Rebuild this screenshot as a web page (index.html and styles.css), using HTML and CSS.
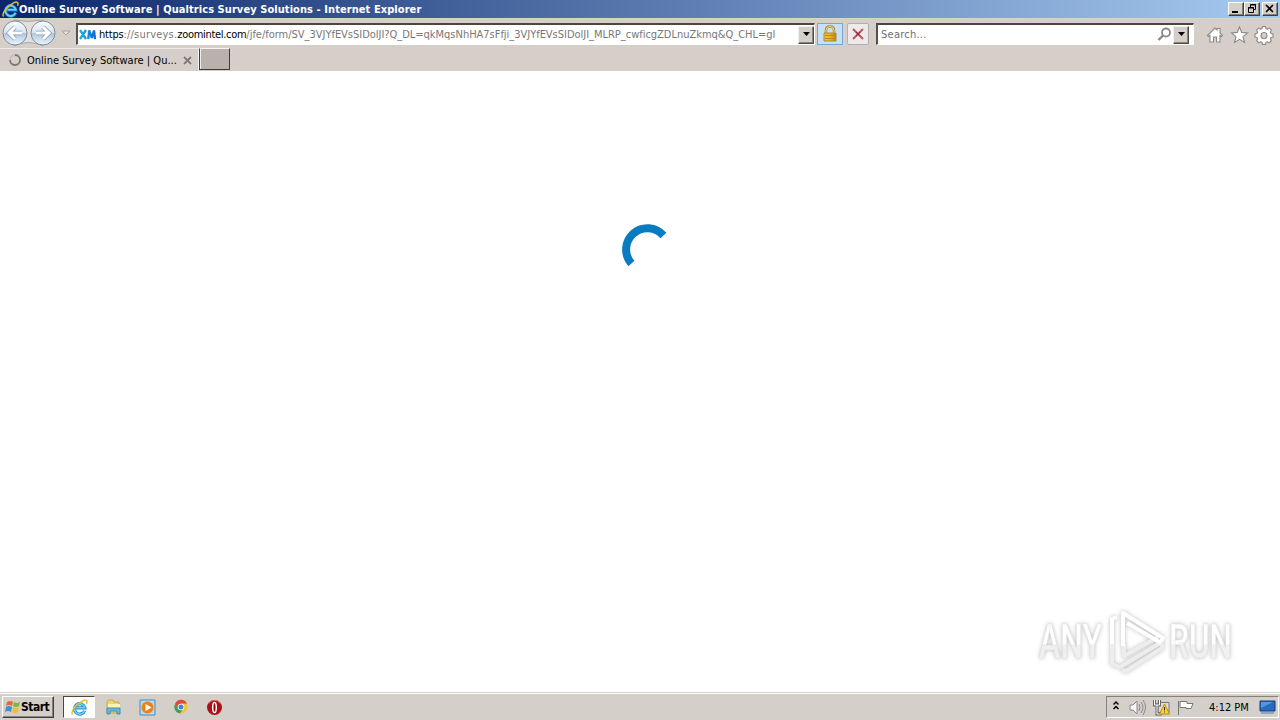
FILE: index.html
```html
<!DOCTYPE html>
<html lang="en"><head><meta charset="utf-8"><title>Online Survey Software</title><link rel="stylesheet" href="styles.css"></head>
<body>
<svg width="0" height="0" class="defs"><defs>
<linearGradient id="nav" x2="0" y2="1"><stop stop-color="#fafcff"/><stop offset=".48" stop-color="#d8e4f1"/><stop offset=".52" stop-color="#b1c6de"/><stop offset="1" stop-color="#e9f7ff"/></linearGradient>
<linearGradient id="gold" x2="1"><stop stop-color="#ecc541"/><stop offset=".5" stop-color="#e9b52a"/><stop offset="1" stop-color="#bd8710"/></linearGradient>
<linearGradient id="xm" gradientUnits="userSpaceOnUse" x2="17"><stop stop-color="#18b8d8"/><stop offset="1" stop-color="#0768dc"/></linearGradient>
<symbol id="ie" viewBox="0 0 16 16"><path d="M12.800 11A4.900 4.900 0 1 1 13 8.300H5" fill="none" stroke="#168bd2" stroke-width="3"/><path d="M12.800 11A4.900 4.900 0 1 1 13 8.300H5" fill="none" stroke="#70d2f7" stroke-width="1.500"/><path d="M1.500 14.600C-.8 12 5 4.500 11 1.700c3-1.400 5-.6 3.600 2.700" fill="none" stroke="#edb82b" stroke-width="1.400"/></symbol>
</defs></svg>
<header class="titlebar"><svg class="title-ie" width="17" height="17"><use href="#ie"/></svg><span class="title">Online Survey Software | Qualtrics Survey Solutions - Internet Explorer</span>
<div class="controls"><i class="btn"><svg width="14" height="12"><path d="M3 9h6" stroke="#000" stroke-width="2"/></svg></i><i class="btn"><svg width="14" height="12"><path d="M5.500 4V1.500h5v5H9M5 2h6" fill="none" stroke="#000"/><path d="M3 5h6M3.500 4.500h5v5h-5z" fill="none" stroke="#000"/></svg></i><i class="btn close"><svg width="14" height="12"><path d="M3 2l7 7M10 2L3 9" stroke="#000" stroke-width="1.600"/></svg></i></div></header>
<nav class="toolbar">
<svg class="arrows" width="74" height="28"><path d="M14 1Q28 4 43 1V27Q28 20 14 27z" fill="#e3dfdc" stroke="#aaa7a5"/><g fill="url(#nav)" stroke="#858b94"><circle cx="15" cy="14" r="12"/><circle cx="43" cy="14" r="12"/></g><g fill="none" stroke="#8498b0" stroke-width="4.400"><path d="M22 14H10M15 8l-6 6 6 6M36 14h12M43 8l6 6-6 6"/></g><g fill="none" stroke="#fff" stroke-width="3"><path d="M22 14H10M15 8l-6 6 6 6M36 14h12M43 8l6 6-6 6"/></g><path d="M62 12h8l-4 4z" fill="#e5e1dd" stroke="#aaa39f"/></svg>
<div class="field address"><svg class="favicon" width="17" height="12"><g fill="none" stroke="url(#xm)" stroke-width="2.300"><path d="M1 1l6 9M7 1l-6 9M9.200 10l1-8.500L12.500 8h.5l2-6.500 1 8.500"/></g></svg><span class="url"><span class="host">https</span><span class="sub">://surveys.</span><span class="domain">zoomintel.com</span><span class="path">/jfe/form/SV_3VJYfEVsSIDolJI?Q_DL=qkMqsNhHA7sFfji_3VJYfEVsSIDolJI_MLRP_cwficgZDLnuZkmq&amp;Q_CHL=gl</span></span><i class="drop"><svg width="9" height="5"><path d="M1 0h7L4.500 4z"/></svg></i></div>
<i class="lock"><svg width="16" height="18"><path d="M4 9V5Q4 1.500 8 1.500T12 5v4" fill="none" stroke="#ad852a" stroke-width="2.500"/><path d="M4 9V5Q4 1.500 8 1.500T12 5v4" fill="none" stroke="#f3db80"/><path d="M2 8h12v8H2z" fill="url(#gold)" stroke="#b38b22"/><path d="M3 10.500h10M3 13.500h10" stroke="#b98b1b"/></svg></i>
<i class="stop"><svg width="14" height="14"><path d="M2 2l10 10M12 2L2 12" stroke="#c25560" stroke-width="2"/><path d="M5 5l4 4M9 5L5 9" stroke="#8d3038"/></svg></i>
<div class="field search"><span class="placeholder">Search...</span><svg class="lens" width="15" height="15"><circle cx="9" cy="5.500" r="4" fill="#fff" stroke="#888" stroke-width="1.800"/><path d="M6 8.500l-4.500 4.500" stroke="#888" stroke-width="2.400"/></svg><i class="drop"><svg width="9" height="5"><path d="M1 0h7L4.500 4z"/></svg></i></div>
<svg class="tools" width="72" height="20"><g fill="#fff" stroke="#8c8987" stroke-width="1.100"><path d="M1.500 10.500L9 3l2 2V3.500h3V8l2.500 2.500-1 1-1.500-1V17h-3.500v-5h-3v5H4v-6.500l-1.500 1z"/><path d="M33.500 2l2.200 5.400 5.800.5-4.500 3.700 1.500 5.800-5-3.100-5 3.100 1.500-5.800-4.500-3.700 5.800-.5z"/><path d="M56.500 1.500h3l.5 2 1.500.6 1.800-1 2.100 2.100-1 1.800.6 1.500 2 .5v3l-2 .5-.6 1.500 1 1.700-2.100 2.100-1.800-1-1.500.6-.5 2h-3l-.5-2-1.500-.6-1.800 1-2.100-2.100 1-1.700-.6-1.500-2-.5V9l2-.5.6-1.500-1-1.800 2.100-2.100 1.800 1 1.500-.6z"/><circle cx="58" cy="10.500" r="3" fill="#d6cec8"/></g></svg>
</nav>
<div class="tabs"><div class="tab"><svg class="busy" width="14" height="14"><path d="M7 2a5 5 0 1 1-5 5" fill="none" stroke="#777" stroke-width="1.800"/><path d="M2 7a5 5 0 0 1 5-5" fill="none" stroke="#c4beb9" stroke-width="1.800"/></svg><span class="tab-title">Online Survey Software | Qu...</span><svg class="tab-x" width="9" height="9"><path d="M1 1l7 7M8 1L1 8" stroke="#807b77" stroke-width="1.800"/></svg></div><div class="new-tab"></div></div>
<main class="page"><svg class="spinner" width="60" height="60"><path d="M21.400 48.500A21.200 21.200 0 0 1 53.400 20.500" fill="none" stroke="#087bc1" stroke-width="8"/></svg>
<svg class="watermark" width="212" height="74"><defs><linearGradient id="wm" x2="0" y2="1"><stop offset=".54" stop-color="#fff"/><stop offset=".56" stop-color="#f0f0f0"/></linearGradient></defs>
<g class="wm"><text x="4" y="50" textLength="63" lengthAdjust="spacingAndGlyphs">ANY</text><text x="134" y="50" textLength="63" lengthAdjust="spacingAndGlyphs">RUN</text></g>
<g fill="none" stroke="#ededed" stroke-width="4" stroke-linejoin="round"><path d="M77 35v21l8 3 42-25M89 35v13l34-19M87 62l4 1 36-23v-4"/></g><g fill="none" stroke="#fff" stroke-width="4" stroke-linejoin="round"><path d="M77 36V11l5-2M88 38V5l40 25-2 4M92 15l34 20"/></g></svg></main>
<footer class="taskbar"><div class="start"><svg width="17" height="16"><path d="M3 3q3-2 6 0L8 7Q5 5 2 7z" fill="#e86a32"/><path d="M10 3q3 2 6 0l-1 4q-3 2-6 0z" fill="#79b943"/><path d="M2 8q3-2 6 0l-1 5q-3-2-6 0z" fill="#3a91d6"/><path d="M9 8q3 2 6 0l-1 5q-3 2-6 0z" fill="#f5bd2c"/></svg><b>Start</b></div>
<div class="task active"><svg width="17" height="17"><use href="#ie"/></svg></div>
<svg class="app folder" width="17" height="17"><path d="M2 3l1-2h5l1 2h5v11H2z" fill="#ecd477" stroke="#c7a94b"/><path d="M3 5h12v5H3z" fill="#fff2aa"/><path d="M2 9h13v6h-3v-3H5v3H2z" fill="#69b9df" stroke="#3d8db9"/></svg>
<svg class="app media" width="17" height="17"><path d="M1 1h15v15H1z" fill="#b9d9f1" stroke="#4b89bd"/><circle cx="8.500" cy="8.500" r="6" fill="#ed8115"/><path d="M6.500 5l6 3.500-6 3.500z" fill="#fff"/></svg>
<svg class="app chrome" width="16" height="16"><circle cx="8" cy="8" r="6.500" fill="#f4c52d"/><path d="M2 5a6.500 6.500 0 0 1 12-.5H8L5 10z" fill="#df4937"/><path d="M2 5a6.500 6.500 0 0 0 5 9.400l3-4.400H5z" fill="#34a260"/><circle cx="8" cy="8" r="3.300" fill="#fff"/><circle cx="8" cy="8" r="2.500" fill="#4285db"/></svg>
<svg class="app opera" width="17" height="17"><circle cx="8.500" cy="8.500" r="7.500" fill="#ae1017"/><path d="M3 4a7 7 0 0 1 11 0" stroke="#e46b67" fill="none"/><ellipse cx="8.500" cy="8.500" rx="1.800" ry="5" fill="#8e080d" stroke="#fff" stroke-width="1.500"/></svg>
<div class="tray"><svg width="102" height="20"><path d="M6.500 7.500L9 5l2.500 2.500M6.500 12L9 9.500l2.500 2.500" stroke="#000" stroke-width="1.500" fill="none"/><g fill="#f7f7f7" stroke="#898989"><path d="M23 8h3l4-4v13l-4-4h-3z"/><path d="M32 7q2 3 0 7M34 5q4 5 0 11M36 3q5 7 0 15" fill="none"/></g><path d="M51 5.500h11v10H51z" fill="#ddd" stroke="#777"/><path d="M47.500 3v5h5V3M50 8v9h5" fill="none" stroke="#666" stroke-width="3"/><path d="M47.500 3v5h5V3M50 8v9h5" fill="none" stroke="#fff"/><path d="M57.500 7l5 10h-10z" fill="#ffd431" stroke="#b48a08"/><path d="M57.500 10v3.500m0 1v1" stroke="#333"/><path d="M71.500 4v14M73 4.500h7v2h6l-2 5h-5v-1h-6z" fill="#fff" stroke="#777"/></svg><span class="clock">4:12 PM</span><svg class="desktop" width="17" height="16"><path d="M1 2h15v10H1z" fill="#266bc0" stroke="#173a78"/><path d="M2 9L14 3H2z" fill="#5298df"/><path d="M2 14h13" stroke="#7797bc" stroke-width="1.500"/></svg></div></footer>
</body></html>
```
FILE: styles.css
```css
* { box-sizing: border-box; }
body { margin: 0; width: 1280px; height: 720px; overflow: hidden; display: flex; flex-direction: column; background: #fff; font: 11px "DejaVu Sans Condensed", "DejaVu Sans", sans-serif; font-stretch: condensed; color: #000; }
svg { display: block; flex: none; }
.defs { position: absolute; }
span { white-space: pre; }
i { font-style: normal; }
.titlebar { height: 18px; flex: none; display: flex; align-items: center; padding-left: 2px; background: linear-gradient(90deg,#0b266b,#a6caf0); color: #fff; font-weight: bold; }
.title { letter-spacing: .07px; }
.controls { display: flex; margin-left: auto; padding-right: 2px; }
.btn { width: 16px; height: 14px; background: #d4d0c8; border: 1px solid; border-color: #fff #404040 #404040 #fff; box-shadow: inset -1px -1px #808080; }
.close { margin-left: 2px; }
.toolbar { height: 30px; flex: none; display: flex; padding-top: 4px; background: #d6cec8; border-top: 1px solid #d8d4c8; }
.arrows { margin-top: -4px; margin-right: 1px; }
.field { height: 22px; background: #fff; border: 1px solid #fff; border-top: 2px solid #4d463f; border-left: 2px solid #57504a; display: flex; align-items: center; }
.address { width: 739px; margin-left: 1px; padding-left: 1px; }
.favicon { margin-right: 3px; }
.url { color: #777; }
.host, .domain { color: #000; }
.host { letter-spacing: -.2px; }
.sub { letter-spacing: .2px; }
.domain { letter-spacing: -.3px; }
.path { letter-spacing: -.02px; }
.drop { width: 16px; height: 18px; margin-left: auto; background: #d4cec8; border: 1px solid; border-color: #f4f0ec #514a45 #514a45 #f4f0ec; box-shadow: inset -1px -1px #8a847e; display: grid; place-items: center; }
.lock { width: 26px; height: 22px; margin-left: 2px; border: 1px solid #79a5dc; background: #c8dff8; display: grid; place-items: center; }
.stop { width: 22px; height: 22px; margin-left: 4px; border: 1px solid #b3afb0; background: #eeeaeb; border-radius: 2px; display: grid; place-items: center; }
.search { width: 318px; margin-left: 7px; padding: 0 4px 0 3px; }
.placeholder { color: #6f6f6f; letter-spacing: .25px; }
.lens { margin-left: auto; }
.search .drop { margin-left: 1px; }
.tools { margin: 2px 0 0 12px; }
.tabs { height: 23px; flex: none; background: #d6cec8; display: flex; border-bottom: 1px solid #d6cfc9; }
.tab { width: 199px; height: 22px; border-top: 1px solid #efebe7; border-right: 1px solid #f6f3f1; display: flex; align-items: center; padding: 1px 0 0 8px; }
.tab-title { margin-left: 5px; letter-spacing: .02px; }
.tab-x { margin-left: auto; margin-right: 6px; }
.new-tab { width: 31px; height: 22px; background: #b9b1ac; border: 1px solid #3f3b38; border-top-color: #f7f4f1; box-shadow: inset 1px 0 #eee; }
.page { flex: 1; display: flex; flex-direction: column; background: #fff; }
.spinner { margin: 144px 0 0 610px; }
.watermark { margin: 333px 0 0 1035px; filter: drop-shadow(0 0 2px #bbb); overflow: visible; }
.wm { font: 500 49px Roboto, sans-serif; fill: url(#wm); stroke: #e6e6e6; stroke-width: .5px; }
.taskbar { height: 28px; flex: none; display: flex; align-items: center; padding: 1px 1px 0 2px; background: #d5cfc9; border-top: 1px solid #d6cfc9; box-shadow: inset 0 1px #fff; }
.start { width: 52px; height: 22px; display: flex; align-items: center; padding-left: 1px; background: #d4cec8; border: 1px solid; border-color: #fff #404040 #404040 #fff; box-shadow: inset -1px -1px #8a847e; }
.start b { font-size: 12px; letter-spacing: -.5px; }
.task { width: 32px; height: 22px; margin-left: 9px; display: grid; place-items: center; background: #fff; border: 1px solid; border-color: #4d4742 #fff #fff #4d4742; }
.folder { margin-left: 10px; }
.media { margin-left: 17px; }
.chrome { margin-left: 17px; }
.opera { margin-left: 17px; }
.tray { width: 173px; height: 22px; margin-left: auto; display: flex; align-items: center; border: 1px solid; border-color: #87817b #fff #fff #87817b; }
.clock { width: 50px; }
.desktop { margin-left: 0; }
```
